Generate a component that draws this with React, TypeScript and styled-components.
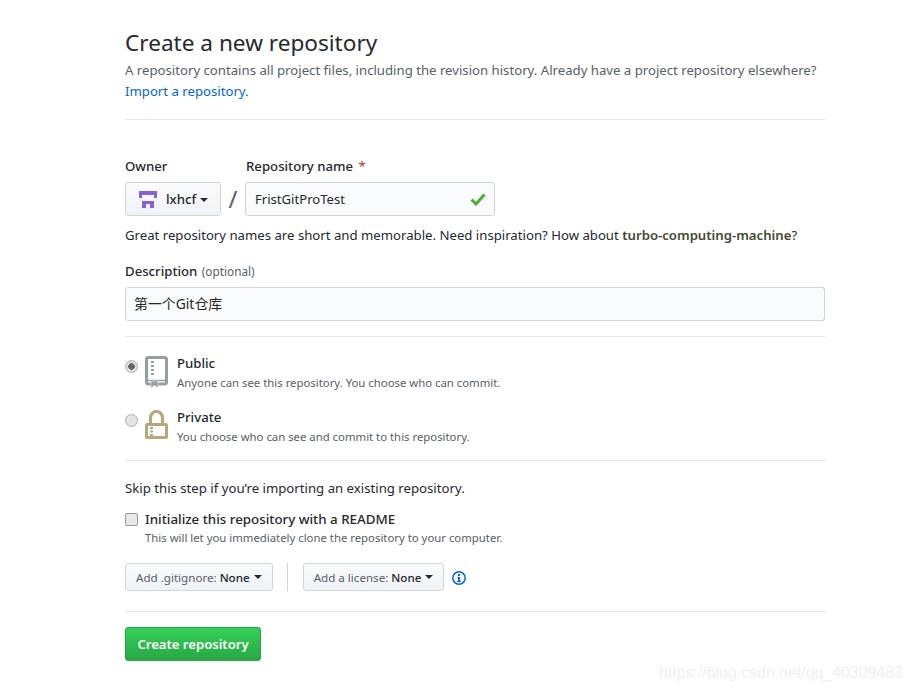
import React from "react";
import styled, { createGlobalStyle } from "styled-components";

const Global = createGlobalStyle`
  html, body { margin: 0; padding: 0; background: #fff; }
  body { font-family: "Noto Sans", "Noto Sans CJK SC", sans-serif; font-size: 13px; color: #24292e; }
`;
const Page = styled.div`
  position: relative;
  width: 911px;
  height: 693px;
  overflow: hidden;
  box-sizing: border-box;
  padding: 26px 86px 0 125px;
`;
const Title = styled.h1`
  margin: 0;
  font-size: 22.6px;
  font-weight: 400;
  line-height: 34px;
`;
const Lead = styled.p`
  margin: 0;
  font-size: 13.18px;
  line-height: 21px;
  color: #586069;
`;
const Link = styled.a`
  color: #0366d6;
`;
const Rule = styled.div<{ $top: number; $bottom: number }>`
  height: 1px;
  background: #e1e4e8;
  margin: ${(p) => p.$top}px 0 ${(p) => p.$bottom}px;
`;
const OwnerRow = styled.div`
  display: flex;
  align-items: flex-end;
`;
const Field = styled.div`
  display: flex;
  flex-direction: column;
`;
const Label = styled.label`
  font-size: 13.2px;
  font-weight: 500;
  line-height: 20px;
  margin-bottom: 6px;
`;
const NameLabel = styled(Label)`
  padding-left: 1px;
`;
const Required = styled.span`
  color: #cb2431;
  font-weight: 400;
  margin-left: 2px;
`;
const Caret = styled.span`
  display: inline-block;
  width: 0;
  height: 0;
  margin-left: 4px;
  border: 4px solid transparent;
  border-top-color: currentColor;
  border-bottom: 0;
  vertical-align: middle;
`;
const OwnerButton = styled.div`
  box-sizing: border-box;
  width: 96px;
  height: 34px;
  border: 1px solid #d1d5da;
  border-radius: 3px;
  background: linear-gradient(#fafbfc, #eff3f6);
  display: flex;
  align-items: center;
  padding-left: 13px;
  font-size: 13.2px;
  font-weight: 500;
  gap: 9px;
`;
const Slash = styled.span`
  width: 24px;
  height: 34px;
  text-align: center;
  font-size: 24px;
  line-height: 34px;
  color: #586069;
`;
const NameInput = styled.div`
  box-sizing: border-box;
  width: 250px;
  height: 34px;
  border: 1px solid #d1d5da;
  border-radius: 3px;
  background: #fafbfc;
  display: flex;
  align-items: center;
  justify-content: space-between;
  padding: 0 8px 0 9px;
  font-size: 13.1px;
`;
const Hint = styled.p`
  margin: 0;
  padding-top: 9px;
  font-size: 13.18px;
  line-height: 20px;
  strong { font-weight: 600; color: #3f4a2f; }
`;
const DescLabel = styled(Label)`
  display: block;
  margin: 16px 0 6px;
  small { font-size: 11.8px; font-weight: 400; color: #586069; margin-left: 1px; }
`;
const DescInput = styled.div`
  box-sizing: border-box;
  height: 34px;
  border: 1px solid #d1d5da;
  border-radius: 3px;
  background: #fafbfc;
  display: flex;
  align-items: center;
  padding: 0 8px 2px;
  font-size: 13.9px;
`;
const Choice = styled.div<{ $mt?: number }>`
  display: flex;
  align-items: flex-start;
  margin-top: ${(p) => p.$mt ?? 0}px;
  height: 36px;
`;
const Radio = styled.span<{ $on?: boolean }>`
  box-sizing: border-box;
  width: 13px;
  height: 13px;
  margin: 7px 7px 0 0;
  border-radius: 50%;
  border: 1px solid #b0b0b0;
  background: ${(p) => (p.$on ? "radial-gradient(circle, #666 0 3px, #dedede 3.6px)" : "#e3e3e3")};
`;
const IconSlot = styled.span`
  width: 23px;
  margin: 3px 9px 0 0;
  display: flex;
  svg { display: block; }
`;
const ChoiceText = styled.div`
  display: flex;
  flex-direction: column;
`;
const ChoiceTitle = styled.span`
  font-size: 13.2px;
  font-weight: 500;
  line-height: 20px;
`;
const ReadmeTitle = styled(ChoiceTitle)`
  font-size: 13.35px;
`;
const Note = styled.span`
  font-size: 11.35px;
  line-height: 18px;
  padding-top: 1px;
  color: #586069;
`;
const Skip = styled.p`
  margin: 0 0 11px;
  font-size: 13.2px;
  line-height: 20px;
`;
const CheckRow = styled.div`
  display: flex;
  align-items: center;
  height: 20px;
`;
const Box = styled.span`
  box-sizing: border-box;
  width: 13px;
  height: 13px;
  margin-right: 7px;
  border: 1px solid #9a9a9a;
  border-radius: 2px;
  background: #e8e8e8;
`;
const CheckNote = styled(Note)`
  display: block;
  padding: 0 0 0 20px;
`;
const SelectRow = styled.div`
  display: flex;
  align-items: center;
  margin-top: 16px;
`;
const SelectButton = styled.div`
  box-sizing: border-box;
  height: 28px;
  padding: 0 10px;
  border: 1px solid #d1d5da;
  border-radius: 3px;
  background: linear-gradient(#fafbfc, #eff3f6);
  display: flex;
  align-items: center;
  font-size: 11.6px;
  font-weight: 400;
  white-space: pre;
  color: #586069;
  b { color: #24292e; font-weight: 500; }
`;
const Caret2 = styled(Caret)`
  color: #24292e;
`;
const Divider = styled.span`
  width: 1px;
  height: 28px;
  background: #d1d5da;
  margin: 0 15px 0 14px;
`;
const Info = styled.span`
  margin: 2px 0 0 8px;
  display: flex;
`;
const CreateButton = styled.button`
  box-sizing: border-box;
  width: 136px;
  height: 34px;
  border: 1px solid #28a745;
  border-radius: 3px;
  background: linear-gradient(#34d058, #28a745);
  color: #fff;
  font-family: inherit;
  font-size: 13.1px;
  font-weight: 600;
  padding: 0;
`;
const Watermark = styled.span`
  position: absolute;
  left: 659px;
  top: 664px;
  font-family: "Liberation Sans", sans-serif;
  font-size: 15.9px;
  color: #efefef;
  white-space: nowrap;
`;

export default function App() {
  return (
    <Page>
      <Global />
      <Title>Create a new repository</Title>
      <Lead>
        A repository contains all project files, including the revision history. Already have a project repository elsewhere?{" "}
        <Link>Import a repository.</Link>
      </Lead>
      <Rule $top={17} $bottom={36} />
      <OwnerRow>
        <Field>
          <Label>Owner</Label>
          <OwnerButton>
            <svg width="18" height="17" viewBox="0 0 18 17">
              <path d="M0 0h18v7h-3V4H3v3H0z" fill="#8a5fd8" />
              <path d="M3 10h12v7h-4v-4H7v4H3z" fill="#8a5fd8" />
            </svg>
            <span>lxhcf<Caret /></span>
          </OwnerButton>
        </Field>
        <Slash>/</Slash>
        <Field>
          <NameLabel>Repository name <Required>*</Required></NameLabel>
          <NameInput>
            FristGitProTest
            <svg width="16" height="14" viewBox="0 0 16 14">
              <path d="M1.5 7.5 6 12 14.5 2.5" fill="none" stroke="#4cae33" strokeWidth="3" />
            </svg>
          </NameInput>
        </Field>
      </OwnerRow>
      <Hint>
        Great repository names are short and memorable. Need inspiration? How about <strong>turbo-computing-machine</strong>?
      </Hint>
      <DescLabel>Description <small>(optional)</small></DescLabel>
      <DescInput>第一个Git仓库</DescInput>
      <Rule $top={15} $bottom={16} />
      <Choice>
        <Radio $on />
        <IconSlot>
          <svg width="23" height="32" viewBox="0 0 23 32">
            <rect x="1.5" y="1.5" width="20" height="26.5" rx="2" fill="#fff" stroke="#959da5" strokeWidth="3" />
            <path d="M1 24.5H22" stroke="#959da5" strokeWidth="1.5" />
            <path d="M6 5h3v2H6zM6 9h3v2H6zM6 13h3v2H6zM6 17h3v2H6z" fill="#959da5" />
            <path d="M6 25h7v7l-3.5-2.5L6 32z" fill="#959da5" stroke="#fff" strokeWidth="0.5" />
          </svg>
        </IconSlot>
        <ChoiceText>
          <ChoiceTitle>Public</ChoiceTitle>
          <Note>Anyone can see this repository. You choose who can commit.</Note>
        </ChoiceText>
      </Choice>
      <Choice $mt={18}>
        <Radio />
        <IconSlot>
          <svg width="23" height="29" viewBox="0 0 23 29">
            <path d="M5.5 14V7.5a6 6 0 0 1 12 0V14" fill="none" stroke="#b6a77f" strokeWidth="3.2" />
            <path fillRule="evenodd" d="M2 13h19a2 2 0 0 1 2 2v12a2 2 0 0 1-2 2H2a2 2 0 0 1-2-2V15a2 2 0 0 1 2-2zm1 3v10h17V16z" fill="#b6a77f" />
            <path d="M5 17h3v2H5zM5 20.5h3v2H5zM5 24h3v2H5z" fill="#b6a77f" />
          </svg>
        </IconSlot>
        <ChoiceText>
          <ChoiceTitle>Private</ChoiceTitle>
          <Note>You choose who can see and commit to this repository.</Note>
        </ChoiceText>
      </Choice>
      <Rule $top={17} $bottom={17} />
      <Skip>Skip this step if you’re importing an existing repository.</Skip>
      <CheckRow>
        <Box />
        <ReadmeTitle>Initialize this repository with a README</ReadmeTitle>
      </CheckRow>
      <CheckNote>This will let you immediately clone the repository to your computer.</CheckNote>
      <SelectRow>
        <SelectButton>Add .gitignore: <b>None</b><Caret2 /></SelectButton>
        <Divider />
        <SelectButton>Add a license: <b>None</b><Caret2 /></SelectButton>
        <Info>
          <svg width="14" height="14" viewBox="0 0 14 14">
            <circle cx="7" cy="7" r="6.2" fill="none" stroke="#0366d6" strokeWidth="1.5" />
            <path d="M6 3h2v2H6zM5.5 6H8v4h1v1H5v-1h1V7h-.5z" fill="#0366d6" />
          </svg>
        </Info>
      </SelectRow>
      <Rule $top={20} $bottom={15} />
      <CreateButton>Create repository</CreateButton>
      <Watermark>https://blog.csdn.net/qq_40309483</Watermark>
    </Page>
  );
}
